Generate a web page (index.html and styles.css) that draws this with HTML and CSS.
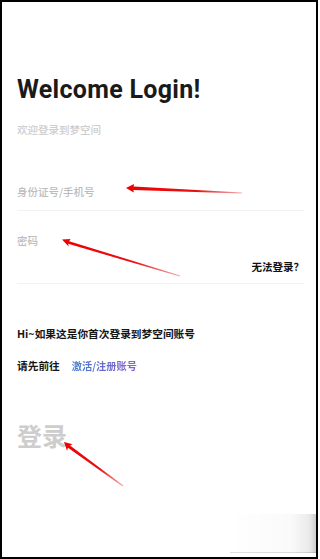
FILE: index.html
```html
<!DOCTYPE html>
<html lang="zh-CN">
<head>
<meta charset="utf-8">
<title>Welcome Login</title>
<link rel="stylesheet" href="styles.css">
</head>
<body>
<div class="frame">
  <main class="login">
    <h1 class="title">Welcome Login!</h1>
    <p class="subtitle">欢迎登录到梦空间</p>
    <div class="field field-user">
      <span class="placeholder">身份证号/手机号</span>
    </div>
    <div class="field field-pw">
      <span class="placeholder">密码</span>
      <a class="forgot">无法登录？</a>
    </div>
    <p class="hi">Hi~如果这是你首次登录到梦空间账号</p>
    <p class="goto">请先前往<a class="reg">激活/注册账号</a></p>
    <button class="submit">登录</button>
  </main>
  <svg class="annot" width="320" height="559" viewBox="0 0 320 559" aria-hidden="true">
    <defs>
      <linearGradient id="g1" gradientUnits="userSpaceOnUse" x1="127" y1="188" x2="242" y2="193">
        <stop offset="0" stop-color="#ee0000"/>
        <stop offset="0.6" stop-color="#e81010"/>
        <stop offset="1" stop-color="#f0b0b0"/>
      </linearGradient>
      <linearGradient id="g2" gradientUnits="userSpaceOnUse" x1="63" y1="240" x2="180" y2="276">
        <stop offset="0" stop-color="#ee0000"/>
        <stop offset="0.6" stop-color="#e81010"/>
        <stop offset="1" stop-color="#f0b0b0"/>
      </linearGradient>
      <linearGradient id="g3" gradientUnits="userSpaceOnUse" x1="65" y1="443" x2="123" y2="486">
        <stop offset="0" stop-color="#ee0000"/>
        <stop offset="0.6" stop-color="#e81010"/>
        <stop offset="1" stop-color="#f0b0b0"/>
      </linearGradient>
    </defs>
    <polygon fill="url(#g1)" points="126,188 134,184 133.6,186.6 242,192.5 242,193.5 133.4,190 133.8,192.4"/>
    <polygon fill="url(#g2)" points="62,239.5 70.5,239 69.2,241.2 180.2,275.5 179.8,276.5 68.2,243.8 68.6,246.5"/>
    <polygon fill="url(#g3)" points="64,442 72.5,444.2 70,445.4 123.4,485.5 122.6,486.4 68,447.8 67,450.8"/>
  </svg>
  <div class="watermark"></div>
</div>
</body>
</html>
```

FILE: styles.css
```css
html, body {
  margin: 0;
  padding: 0;
  background: #ffffff;
}

.frame {
  position: relative;
  box-sizing: border-box;
  width: 318px;
  height: 559px;
  border: 2px solid #000;
  background: #fff;
  overflow: hidden;
}

.login {
  display: flex;
  flex-direction: column;
  align-items: flex-start;
  padding: 73px 12px 0 15px;
  font-family: "Noto Sans CJK SC", "Noto Sans", sans-serif;
}

.title {
  margin: 0;
  font-family: Roboto, "Liberation Sans", sans-serif;
  font-weight: 700;
  font-size: 25px;
  line-height: 30px;
  color: #1a1a1a;
  letter-spacing: 0.3px;
}

.subtitle {
  margin: 17px 0 0;
  font-size: 10.5px;
  line-height: 16px;
  font-weight: 500;
  color: #cdcdcd;
}

.field {
  align-self: stretch;
  box-sizing: border-box;
  border-bottom: 1px solid #f2f2f2;
  font-size: 10.5px;
  line-height: 16px;
}

.field-user {
  margin-top: 46px;
  padding-bottom: 10px;
}

.field-pw {
  display: flex;
  flex-direction: column;
  margin-top: 22px;
  padding-bottom: 8px;
}

.placeholder {
  font-weight: 500;
  color: #bcbcbc;
}

.forgot {
  align-self: flex-end;
  margin-top: 10px;
  margin-right: 0;
  font-weight: 700;
  color: #111;
}

.hi {
  margin: 42px 0 0;
  font-size: 10.7px;
  line-height: 16px;
  font-weight: 700;
  color: #151515;
}

.goto {
  margin: 16px 0 0;
  font-size: 10.7px;
  line-height: 16px;
  font-weight: 700;
  color: #151515;
}

.reg {
  margin-left: 12px;
  font-size: 10.2px;
  background: linear-gradient(90deg, #3c7ad6, #8f5fc9);
  -webkit-background-clip: text;
  background-clip: text;
  color: transparent;
}

.submit {
  margin: 46px 0 0;
  padding: 0;
  border: 0;
  background: none;
  font-family: "Noto Sans CJK SC", sans-serif;
  font-size: 25px;
  line-height: 30px;
  font-weight: 700;
  color: #cdcdcd;
}

.annot {
  position: absolute;
  left: -2px;
  top: -2px;
  pointer-events: none;
}

.watermark {
  position: absolute;
  right: 0;
  bottom: 4px;
  width: 86px;
  height: 38px;
  background: linear-gradient(90deg, rgba(0,0,0,0) 0%, rgba(0,0,0,0.02) 70%, rgba(0,0,0,0.08) 92%, rgba(0,0,0,0.2) 100%);
  border-bottom: 1px solid rgba(0,0,0,0.12);
}
```
